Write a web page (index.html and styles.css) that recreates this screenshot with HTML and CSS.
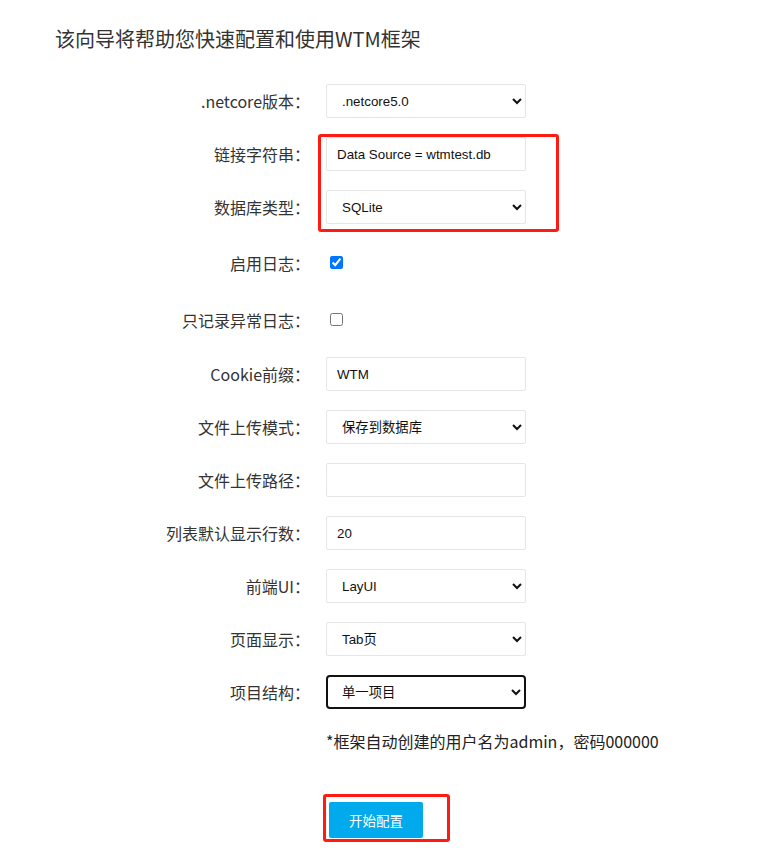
FILE: index.html
```html
<!DOCTYPE html>
<html lang="zh-CN">
<head>
<meta charset="utf-8">
<title>WTM 配置向导</title>
<link rel="stylesheet" href="styles.css">
</head>
<body>
<div class="page">
  <h1 class="title">该向导将帮助您快速配置和使用WTM框架</h1>
  <form class="form">
    <label class="label">.netcore版本：</label>
    <select class="control"><option>.netcore5.0</option></select>

    <label class="label">链接字符串：</label>
    <input class="control" type="text" value="Data Source = wtmtest.db">

    <label class="label">数据库类型：</label>
    <select class="control"><option>SQLite</option></select>

    <label class="label check-a">启用日志：</label>
    <div class="check-cell check-a"><input type="checkbox" checked></div>

    <label class="label check-b">只记录异常日志：</label>
    <div class="check-cell check-b"><input type="checkbox"></div>

    <label class="label">Cookie前缀：</label>
    <input class="control" type="text" value="WTM">

    <label class="label">文件上传模式：</label>
    <select class="control"><option>保存到数据库</option></select>

    <label class="label">文件上传路径：</label>
    <input class="control" type="text" value="">

    <label class="label">列表默认显示行数：</label>
    <input class="control" type="text" value="20">

    <label class="label">前端UI：</label>
    <select class="control"><option>LayUI</option></select>

    <label class="label">页面显示：</label>
    <select class="control"><option>Tab页</option></select>

    <label class="label">项目结构：</label>
    <select class="control focused"><option>单一项目</option></select>

    <p class="note">*框架自动创建的用户名为admin，密码000000</p>

    <div class="actions">
      <button type="button" class="btn">开始配置</button>
    </div>
  </form>

  <div class="mark mark-db"></div>
  <div class="mark mark-btn"></div>
</div>
</body>
</html>
```

FILE: styles.css
```css
html, body {
  margin: 0;
  padding: 0;
  background: #ffffff;
}

body {
  font-family: "Noto Sans CJK SC", "Noto Sans", sans-serif;
  color: #333333;
}

.page {
  position: relative;
  width: 776px;
  min-height: 848px;
}

.title {
  margin: 0;
  padding: 24px 0 0 55px;
  font-size: 20px;
  font-weight: normal;
  line-height: 30px;
  color: #333333;
  height: 84px;
  box-sizing: border-box;
}

.form {
  display: grid;
  grid-template-columns: 310px 200px;
  column-gap: 16px;
  row-gap: 19px;
  margin: 0;
}

.label {
  display: flex;
  align-items: center;
  justify-content: flex-end;
  font-size: 16px;
  line-height: 20px;
  color: #333333;
  white-space: nowrap;
}

.control {
  box-sizing: border-box;
  width: 200px;
  height: 34px;
  margin: 0;
  border: 1px solid #e6e6e6;
  border-radius: 2px;
  background: #ffffff;
  font-family: "Liberation Sans", "Noto Sans CJK SC", sans-serif;
  font-size: 13.33px;
  color: #111111;
  padding: 0 10px;
  outline: none;
}

select.control {
  padding: 0 4px 0 11px;
}

.control.focused {
  border: 2px solid #111111;
  border-radius: 4px;
  padding-left: 10px;
}

.check-cell {
  display: flex;
  align-items: center;
}

.check-cell input {
  width: 13px;
  height: 13px;
  margin: 0 0 0 4px;
}

.check-a {
  height: 39px;
}

.check-b {
  height: 37px;
}

.note {
  grid-column: 2;
  margin: 1px 0 0 0;
  font-size: 16px;
  line-height: 24px;
  color: #222222;
  white-space: nowrap;
}

.actions {
  grid-column: 2;
  padding-top: 30px;
}

.btn {
  margin-left: 3px;
  width: 94px;
  height: 36px;
  border: none;
  border-radius: 2px;
  background: #01aaed;
  color: #ffffff;
  font-family: "Noto Sans CJK SC", sans-serif;
  font-size: 13.5px;
  padding: 0;
}

.mark {
  position: absolute;
  box-sizing: border-box;
  border: 3px solid #ff1a12;
  border-radius: 3px;
  pointer-events: none;
}

.mark-db {
  left: 318px;
  top: 134px;
  width: 241px;
  height: 98px;
}

.mark-btn {
  left: 323px;
  top: 794px;
  width: 127px;
  height: 48px;
}
```
